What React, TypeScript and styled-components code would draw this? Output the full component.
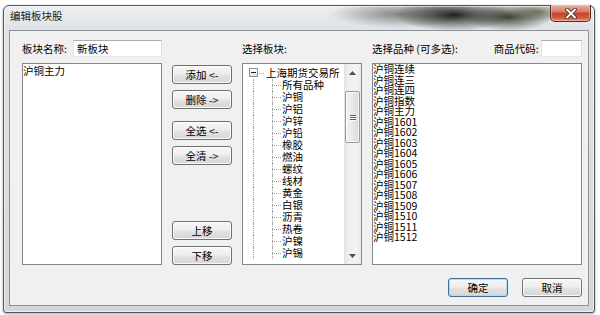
import React from "react";
import styled, { createGlobalStyle } from "styled-components";

const GlobalStyle = createGlobalStyle`
  html, body { margin: 0; padding: 0; background: #ffffff; }
  body {
    font-family: "Noto Sans CJK SC", "Noto Sans", sans-serif;
    font-size: 10.5px;
    color: #000;
  }
  * { box-sizing: border-box; }
`;

const Page = styled.div`
  width: 600px;
  height: 315px;
  padding: 5px 0 0 3px;
`;

const Window = styled.div`
  width: 592px;
  height: 308px;
  display: flex;
  flex-direction: column;
  border: 1px solid #50555b;
  border-radius: 6px 6px 3px 3px;
  background:
    radial-gradient(ellipse 60px 16px at 450px 9px, rgba(20, 22, 18, 0.95), rgba(20, 22, 18, 0)),
    radial-gradient(ellipse 45px 14px at 505px 11px, rgba(45, 50, 30, 0.9), rgba(45, 50, 30, 0)),
    radial-gradient(ellipse 30px 10px at 535px 6px, rgba(90, 95, 60, 0.7), rgba(90, 95, 60, 0)),
    radial-gradient(ellipse 70px 14px at 395px 8px, rgba(70, 70, 62, 0.6), rgba(70, 70, 62, 0)),
    linear-gradient(180deg, #eceef0 0px, #dfe3e7 24px, #d2d7dc 100%);
  box-shadow: inset 0 0 0 1px rgba(255, 255, 255, 0.55), 0 1px 3px rgba(0, 0, 0, 0.35);
`;

const TitleBar = styled.div`
  height: 24px;
  display: flex;
  align-items: flex-start;
  justify-content: space-between;
  padding: 0 3px 0 6px;
`;

const Title = styled.span`
  line-height: 20px;
  color: #1b1b1b;
`;

const CloseButton = styled.div`
  margin-top: -1px;
  width: 41px;
  height: 17px;
  display: flex;
  align-items: center;
  justify-content: center;
  border: 1px solid #5b2a22;
  border-top: none;
  border-radius: 0 0 5px 5px;
  background: linear-gradient(180deg, #eab2a2 0%, #d97a62 42%, #c4432b 52%, #cf5c43 80%, #e79479 100%);
  box-shadow: inset 0 0 0 1px rgba(255, 200, 180, 0.5);
`;

const Client = styled.div`
  flex: 1;
  margin: 0 5px 6px 5px;
  border: 1px solid #8e9398;
  background: #f0f0f0;
  padding: 9px 0 0 12px;
`;

const Body = styled.div`
  width: 560px;
  display: grid;
  grid-template-columns: 140px 60px 120px 210px;
  grid-template-rows: 17px 202px;
  column-gap: 10px;
  row-gap: 6px;
`;

const HeaderCell = styled.div<{ $col: number }>`
  grid-column: ${(p) => p.$col};
  grid-row: 1;
  display: flex;
  align-items: center;
  white-space: pre;
`;

const Spacer = styled.div`
  flex: 1;
`;

const TextInput = styled.div<{ $w: number }>`
  width: ${(p) => p.$w}px;
  height: 17px;
  margin-left: auto;
  background: #fff;
  border: 1px solid #abadb3;
  border-color: #abadb3 #dbdfe6 #e3e9ef #e2e3ea;
  padding-left: 3px;
  line-height: 15px;
`;

const ListBox = styled.div`
  grid-row: 2;
  background: #fff;
  border: 1px solid #828790;
  overflow: hidden;
`;

const LeftList = styled(ListBox)`
  grid-column: 1;
  line-height: 14px;
`;

const RightList = styled(ListBox)`
  grid-column: 4;
  line-height: 10.5px;
`;

const ListItem = styled.div`
  white-space: nowrap;
`;

const ButtonColumn = styled.div`
  grid-column: 2;
  grid-row: 2;
  display: flex;
  flex-direction: column;
  padding-top: 2px;
`;

const Btn = styled.div<{ $gap?: number; $push?: boolean; $default?: boolean }>`
  width: 60px;
  height: 19px;
  margin-top: ${(p) => (p.$push ? "auto" : `${p.$gap ?? 0}px`)};
  display: flex;
  align-items: center;
  justify-content: center;
  white-space: pre;
  border: 1px solid ${(p) => (p.$default ? "#3a6f9e" : "#707070")};
  border-radius: 3px;
  background: linear-gradient(180deg, #f7f7f7 0%, #efefef 45%, #e2e2e2 55%, #d6d6d6 100%);
  box-shadow: inset 0 0 0 1px ${(p) => (p.$default ? "rgba(170, 220, 245, 0.9)" : "rgba(255, 255, 255, 0.8)")};
  line-height: 17px;
`;

const TreeBox = styled(ListBox)`
  grid-column: 3;
  display: flex;
`;

const TreeContent = styled.div`
  flex: 1;
  padding-top: 3px;
  overflow: hidden;
`;

const TreeRow = styled.div`
  height: 12px;
  line-height: 12px;
  display: flex;
  align-items: stretch;
  white-space: nowrap;
`;

const Expander = styled.span`
  margin: 1px 0 0 6px;
  width: 9px;
  height: 9px;
  border: 1px solid #919191;
  background: linear-gradient(180deg, #ffffff, #e4e4e4);
  display: flex;
  align-items: center;
  justify-content: center;
  &::before {
    content: "";
    width: 5px;
    height: 1px;
    background: #1a1a1a;
  }
`;

const Dash = styled.span<{ $w: number }>`
  width: ${(p) => p.$w}px;
  background-image: linear-gradient(90deg, #a0a0a0 50%, transparent 50%);
  background-size: 2px 1px;
  background-repeat: repeat-x;
  background-position: 1px 6px;
`;

const RootGuide = styled.span`
  margin-left: 10px;
  width: 19px;
  border-left: 1px dotted #a0a0a0;
`;

const ChildGuide = styled.span`
  width: 10px;
  border-left: 1px dotted #a0a0a0;
  background-image: linear-gradient(90deg, #a0a0a0 50%, transparent 50%);
  background-size: 2px 1px;
  background-repeat: repeat-x;
  background-position: 1px 6px;
`;

const NodeText = styled.span<{ $pad: number }>`
  padding-left: ${(p) => p.$pad}px;
`;

const ScrollBar = styled.div`
  width: 17px;
  display: flex;
  flex-direction: column;
  background: linear-gradient(90deg, #e2e2e2 0%, #efefef 25%, #f4f4f4 75%, #e8e8e8 100%);
`;

const ScrollArrow = styled.div`
  height: 17px;
  display: flex;
  align-items: center;
  justify-content: center;
`;

const ScrollTrack = styled.div`
  flex: 1;
  display: flex;
  flex-direction: column;
  padding: 10px 1px 0 1px;
`;

const ScrollThumb = styled.div`
  height: 52px;
  border: 1px solid #9a9a9a;
  border-radius: 2px;
  background: linear-gradient(90deg, #f4f4f4 0%, #e8e8e8 50%, #d8d8d8 100%);
  box-shadow: inset 0 0 0 1px rgba(255, 255, 255, 0.7);
  display: flex;
  flex-direction: column;
  align-items: center;
  justify-content: center;
  gap: 1px;
`;

const GripLine = styled.span`
  width: 6px;
  height: 1px;
  background: #5a5a5a;
  box-shadow: 0 1px 0 #ffffff;
`;

const Footer = styled.div`
  width: 560px;
  margin-top: 13px;
  display: flex;
  justify-content: flex-end;
  gap: 14px;
`;

const treeChildren = [
  "所有品种",
  "沪铜",
  "沪铝",
  "沪锌",
  "沪铅",
  "橡胶",
  "燃油",
  "螺纹",
  "线材",
  "黄金",
  "白银",
  "沥青",
  "热卷",
  "沪镍",
  "沪锡",
];

const varieties = [
  "沪铜连续",
  "沪铜连三",
  "沪铜连四",
  "沪铜指数",
  "沪铜主力",
  "沪铜1601",
  "沪铜1602",
  "沪铜1603",
  "沪铜1604",
  "沪铜1605",
  "沪铜1606",
  "沪铜1507",
  "沪铜1508",
  "沪铜1509",
  "沪铜1510",
  "沪铜1511",
  "沪铜1512",
];

const CloseIcon = () => (
  <svg width="12" height="11" viewBox="0 0 12 11">
    <path d="M2 1.5 L10 9.5 M10 1.5 L2 9.5" stroke="#3a2420" strokeWidth="3.6" strokeLinecap="round" />
    <path d="M2 1.5 L10 9.5 M10 1.5 L2 9.5" stroke="#ffffff" strokeWidth="2" strokeLinecap="round" />
  </svg>
);

const Arrow = ({ up }: { up?: boolean }) => (
  <svg width="7" height="4" viewBox="0 0 7 4">
    <path d={up ? "M0 4 L3.5 0 L7 4 Z" : "M0 0 L3.5 4 L7 0 Z"} fill="#4d4d4d" />
  </svg>
);

export default function App() {
  return (
    <>
      <GlobalStyle />
      <Page>
        <Window>
          <TitleBar>
            <Title>编辑板块股</Title>
            <CloseButton>
              <CloseIcon />
            </CloseButton>
          </TitleBar>
          <Client>
            <Body>
              <HeaderCell $col={1}>
                <span>板块名称:</span>
                <TextInput $w={89}>新板块</TextInput>
              </HeaderCell>
              <HeaderCell $col={3}>
                <span>选择板块:</span>
              </HeaderCell>
              <HeaderCell $col={4}>
                <span>选择品种 (可多选):</span>
                <Spacer />
                <span>商品代码: </span>
                <TextInput $w={41} />
              </HeaderCell>

              <LeftList>
                <ListItem>沪铜主力</ListItem>
              </LeftList>

              <ButtonColumn>
                <Btn>添加 {"<-"}</Btn>
                <Btn $gap={6}>删除 {"->"}</Btn>
                <Btn $gap={12}>全选 {"<-"}</Btn>
                <Btn $gap={6}>全清 {"->"}</Btn>
                <Btn $push>上移</Btn>
                <Btn $gap={6}>下移</Btn>
              </ButtonColumn>

              <TreeBox>
                <TreeContent>
                  <TreeRow>
                    <Expander />
                    <Dash $w={7} />
                    <NodeText $pad={1}>上海期货交易所</NodeText>
                  </TreeRow>
                  {treeChildren.map((name) => (
                    <TreeRow key={name}>
                      <RootGuide />
                      <ChildGuide />
                      <NodeText $pad={0}>{name}</NodeText>
                    </TreeRow>
                  ))}
                </TreeContent>
                <ScrollBar>
                  <ScrollArrow>
                    <Arrow up />
                  </ScrollArrow>
                  <ScrollTrack>
                    <ScrollThumb>
                      <GripLine />
                      <GripLine />
                      <GripLine />
                    </ScrollThumb>
                  </ScrollTrack>
                  <ScrollArrow>
                    <Arrow />
                  </ScrollArrow>
                </ScrollBar>
              </TreeBox>

              <RightList>
                {varieties.map((v) => (
                  <ListItem key={v}>{v}</ListItem>
                ))}
              </RightList>
            </Body>
            <Footer>
              <Btn $default>确定</Btn>
              <Btn>取消</Btn>
            </Footer>
          </Client>
        </Window>
      </Page>
    </>
  );
}
